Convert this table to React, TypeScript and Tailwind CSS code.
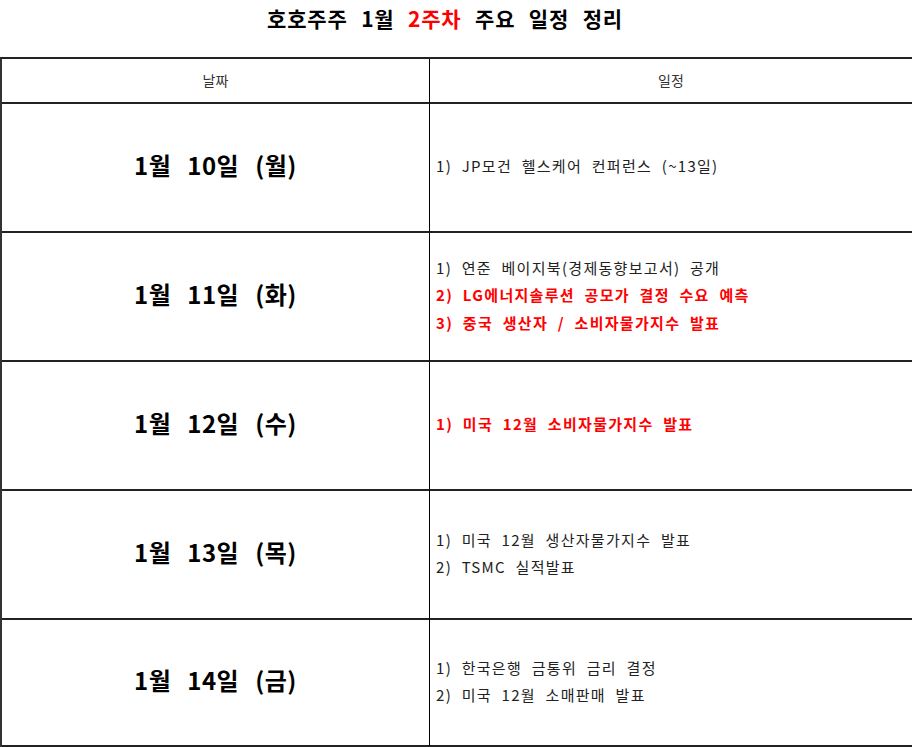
import React from "react";

type Line = { text: string; red?: boolean };
type Row = { date: string; lines: Line[] };

const rows: Row[] = [
  { date: "1월 10일 (월)", lines: [{ text: "1) JP모건 헬스케어 컨퍼런스 (~13일)" }] },
  {
    date: "1월 11일 (화)",
    lines: [
      { text: "1) 연준 베이지북(경제동향보고서) 공개" },
      { text: "2) LG에너지솔루션 공모가 결정 수요 예측", red: true },
      { text: "3) 중국 생산자 / 소비자물가지수 발표", red: true },
    ],
  },
  { date: "1월 12일 (수)", lines: [{ text: "1) 미국 12월 소비자물가지수 발표", red: true }] },
  {
    date: "1월 13일 (목)",
    lines: [{ text: "1) 미국 12월 생산자물가지수 발표" }, { text: "2) TSMC 실적발표" }],
  },
  {
    date: "1월 14일 (금)",
    lines: [{ text: "1) 한국은행 금통위 금리 결정" }, { text: "2) 미국 12월 소매판매 발표" }],
  },
];

const font = { fontFamily: '"Noto Sans CJK KR", "Noto Sans", sans-serif' };

export default function App() {
  return (
    <div className="w-[912px] h-[747px] bg-white overflow-hidden text-[#111]" style={font}>
      <div className="h-[57px] flex justify-center pt-[4px] pr-[22px]">
        <h1 className="text-[21px] leading-[28px] font-bold tracking-[0.8px] [word-spacing:8px] text-black">
          호호주주 1월 <span className="text-[#ff0000]">2주차</span> 주요 일정 정리
        </h1>
      </div>
      <div className="grid grid-cols-[428px_1fr] grid-rows-[45px_129px_129px_129px_129px_127px] border-t-2 border-t-[#222] border-l-2 border-l-[#333]">
        <div className="flex items-center justify-center text-[14px] text-[#333] border-r border-r-black border-b-2 border-b-[#222]">
          날짜
        </div>
        <div className="flex items-center justify-center text-[14px] text-[#333] border-b-2 border-b-[#222]">
          일정
        </div>
        {rows.map((r, i) => (
          <React.Fragment key={i}>
            <div className="flex items-center justify-center pb-[5px] text-[24px] font-bold text-black border-r border-r-black border-b-2 border-b-[#222] tracking-[0.5px] [word-spacing:10px]">
              {r.date}
            </div>
            <div className="flex flex-col justify-center pl-[6px] pb-[3px] border-b-2 border-b-[#222]">
              {r.lines.map((l, j) => (
                <div
                  key={j}
                  className={
                    l.red
                      ? "text-[15px] leading-[27.5px] font-bold text-[#ff0000] tracking-[1.3px] [word-spacing:5px]"
                      : "text-[15px] leading-[27.5px] text-[#222] tracking-[1.3px] [word-spacing:5px]"
                  }
                >
                  {l.text}
                </div>
              ))}
            </div>
          </React.Fragment>
        ))}
      </div>
    </div>
  );
}
